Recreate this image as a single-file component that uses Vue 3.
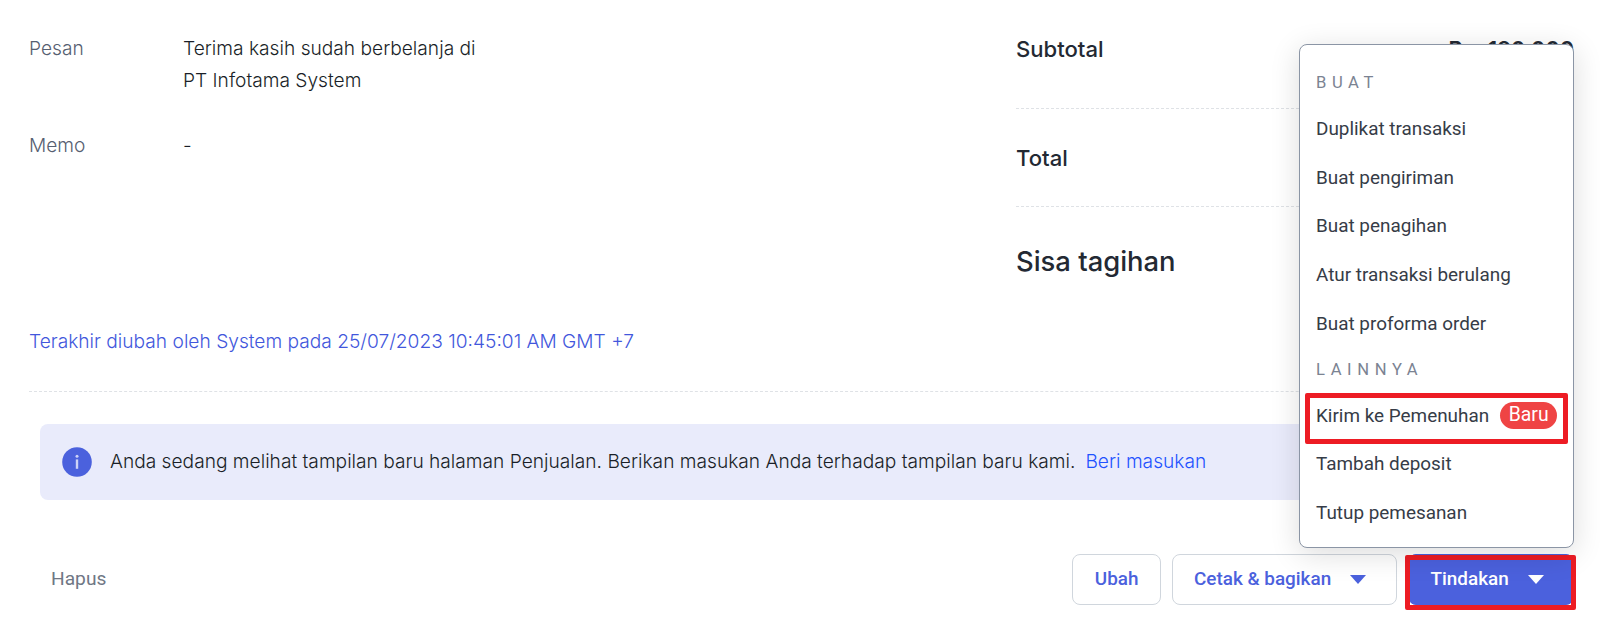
<template>
    <main class="page">
        <section class="detail">
            <dl class="notes">
                <div v-for="note in notes" :key="note.label" class="note">
                    <dt>{{ note.label }}</dt>
                    <dd>{{ note.value }}</dd>
                </div>
            </dl>

            <div class="totals">
                <div class="total-row subtotal"><span>Subtotal</span><span class="amount">Rp. 190.000</span></div>
                <div class="total-row total"><span>Total</span></div>
                <div class="total-row due"><span>Sisa tagihan</span></div>
            </div>
        </section>

        <a class="last-edit">Terakhir diubah oleh System pada 25/07/2023 10:45:01 AM GMT +7</a>

        <div class="divider"></div>

        <div class="info-banner">
            <svg class="info-icon" viewBox="0 0 30 30">
                <circle cx="15" cy="15" r="14.8" fill="#4b61dd" />
                <circle cx="15" cy="9.3" r="1.5" fill="#cdd3f7" />
                <path d="M15 12.4v9.4" stroke="#cdd3f7" stroke-width="2.4" />
            </svg>
            <span>Anda sedang melihat tampilan baru halaman Penjualan. Berikan masukan Anda terhadap tampilan baru kami.</span>
            <a class="feedback">Beri masukan</a>
        </div>

        <footer class="actions">
            <button class="btn-text">Hapus</button>
            <div class="action-group">
                <button class="btn">Ubah</button>
                <button class="btn btn-print">
                    Cetak &amp; bagikan
                    <svg class="caret" viewBox="0 0 16 9"><path d="M0 0h16L8 9z" fill="currentColor" /></svg>
                </button>
                <div class="dropdown">
                    <button class="btn btn-primary">
                        Tindakan
                        <svg class="caret" viewBox="0 0 16 9"><path d="M0 0h16L8 9z" fill="currentColor" /></svg>
                    </button>
                    <div class="highlight highlight-button"></div>

                    <div class="menu">
                        <template v-for="group in groups" :key="group.title">
                            <h6 class="menu-title">{{ group.title }}</h6>
                            <a v-for="item in group.items" :key="item.label" class="menu-item">
                                {{ item.label }}
                                <span v-if="item.badge" class="badge">{{ item.badge }}</span>
                                <span v-if="item.badge" class="highlight highlight-item"></span>
                            </a>
                        </template>
                    </div>
                </div>
            </div>
        </footer>
    </main>
</template>

<script setup>
const notes = [
    { label: 'Pesan', value: 'Terima kasih sudah berbelanja di\nPT Infotama System' },
    { label: 'Memo', value: '-' }
]

const groups = [
    {
        title: 'BUAT',
        items: [
            { label: 'Duplikat transaksi' },
            { label: 'Buat pengiriman' },
            { label: 'Buat penagihan' },
            { label: 'Atur transaksi berulang' },
            { label: 'Buat proforma order' }
        ]
    },
    {
        title: 'LAINNYA',
        items: [
            { label: 'Kirim ke Pemenuhan', badge: 'Baru' },
            { label: 'Tambah deposit' },
            { label: 'Tutup pemesanan' }
        ]
    }
]
</script>

<style>
body {
    margin: 0;
    background: #fff;
}
</style>

<style scoped>
.page {
    box-sizing: border-box;
    width: 1600px;
    height: 625px;
    padding: 32px 26px 0 29px;
    overflow: hidden;
    font: 300 19.17px/32px Inter, "Liberation Sans", sans-serif;
    color: #1a1f28;
}

.detail {
    display: flex;
    justify-content: space-between;
    height: 293px;
}

.notes {
    margin: 0;
}

.note {
    display: flex;
    margin-bottom: 33px;
}

.note dt {
    width: 154px;
    color: #566071;
}

.note dd {
    margin: 0;
    white-space: pre-line;
}

.totals {
    width: 558px;
    font-weight: 500;
    font-size: 22.1px;
    color: #232933;
}

.total-row {
    box-sizing: border-box;
    display: flex;
    justify-content: space-between;
    border-bottom: 1px dashed #dfe2e6;
}

.subtotal {
    height: 77px;
    padding-top: 1px;
}

.total {
    height: 98px;
    padding-top: 33px;
}

.due {
    padding-top: 38px;
    border-bottom: 0;
    font-size: 27.4px;
}

.amount {
    font-weight: 600;
    font-size: 21.7px;
}

.last-edit {
    display: block;
    height: 66px;
    color: #4257dc;
}

/* Garis pemisah antara detail dan aksi */
.divider {
    border-top: 1px dashed #dfe2e6;
}

.info-banner {
    box-sizing: border-box;
    display: flex;
    align-items: center;
    height: 76px;
    margin: 32px 0 0 11px;
    padding: 0 22px;
    border-radius: 8px;
    background: #e9ebfb;
    white-space: nowrap;
}

.info-banner span,
.feedback {
    padding-bottom: 2px;
}

.info-icon {
    width: 30px;
    height: 30px;
    margin-right: 18px;
}

.feedback {
    margin-left: 10px;
    color: #1f52ff;
}

.actions {
    display: flex;
    justify-content: space-between;
    margin: 54px 0 0 22px;
}

.action-group {
    display: flex;
    gap: 11px;
}

button {
    font-family: Roboto, "Liberation Sans", sans-serif;
    font-size: 18.9px;
}

.btn-text {
    padding: 0 0 3px;
    border: 0;
    background: none;
    font-size: 19.2px;
    font-weight: 400;
    color: #6f7785;
}

.btn {
    box-sizing: border-box;
    display: flex;
    align-items: center;
    height: 51px;
    padding: 0 21.5px 2px;
    border: 1px solid #d0d6dd;
    border-radius: 8px;
    background: #fff;
    font-weight: 500;
    color: #4b61dd;
}

.btn-print {
    width: 225px;
    padding-left: 21px;
}

.btn-primary {
    width: 166px;
    border-color: #4b61dd;
    background: #4b61dd;
    color: #fff;
}

.caret {
    width: 16px;
    height: 9px;
    margin: 1px 0 0 19px;
}

.dropdown {
    position: relative;
}

.highlight {
    position: absolute;
    box-sizing: border-box;
    border: 5px solid #ed1c24;
    border-radius: 2px;
}

.highlight-button {
    top: 1px;
    left: -3px;
    width: 171px;
    height: 55px;
}

.menu {
    position: absolute;
    right: 0;
    bottom: calc(100% + 6px);
    box-sizing: border-box;
    width: 275px;
    height: 504px;
    padding-top: 13.8px;
    border: 1px solid #8b95a5;
    border-radius: 8px;
    background: #fff;
    box-shadow: 0 6px 30px rgba(0, 0, 0, 0.14);
    font: 400 18.9px/48.75px Roboto, "Liberation Sans", sans-serif;
    color: #363c47;
}

.menu-title {
    margin: 0;
    padding-left: 16px;
    height: 46px;
    font-size: 16.6px;
    font-weight: 400;
    line-height: 48px;
    letter-spacing: 5.6px;
    color: #7b8392;
}

.menu-item {
    position: relative;
    display: flex;
    align-items: center;
    padding-left: 16px;
    height: 48.75px;
    white-space: nowrap;
}

.menu-item + .menu-title {
    height: 43px;
    line-height: 41px;
}

.badge {
    box-sizing: border-box;
    width: 57px;
    height: 27px;
    margin: -1px 0 0 11px;
    border-radius: 14px;
    background: #ef4444;
    font-size: 19.4px;
    line-height: 26px;
    text-align: center;
    color: #fff;
}

.highlight-item {
    top: 1.5px;
    left: 5px;
    width: 263px;
    height: 51px;
}
</style>
